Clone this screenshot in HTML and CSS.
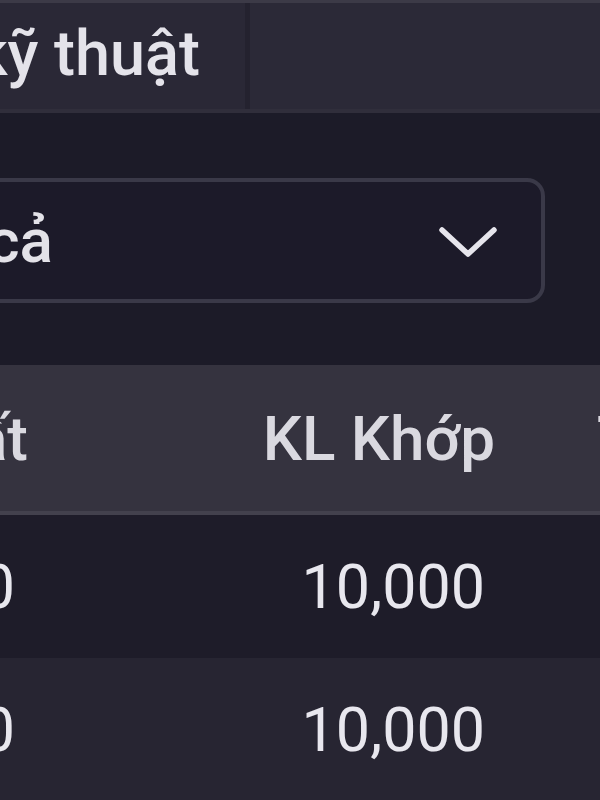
FILE: index.html
```html
<!DOCTYPE html>
<html lang="vi">
<head>
    <meta charset="UTF-8">
    <meta name="viewport" content="width=device-width, initial-scale=1.0">
    <title>Khớp lệnh</title>
    <link rel="stylesheet" href="styles.css">
</head>
<body>
    <div class="app">
        <div class="tabs">
            <div class="tab active">Phân tích kỹ thuật</div>
            <div class="tab"></div>
        </div>
        <div class="filter">
            <div class="select">
                <span>Tất cả</span>
                <svg class="chevron" viewBox="0 0 62 34" width="62" height="34">
                    <polyline points="5,5 31,29 57,5" fill="none" stroke="#e6e5ec" stroke-width="5.5" stroke-linecap="round" stroke-linejoin="round"/>
                </svg>
            </div>
        </div>
        <div class="trades">
            <div class="row head">
                <div class="cell c1">Giá thấp nhất</div>
                <div class="cell c2">KL Khớp</div>
                <div class="cell c3">Thời gian</div>
            </div>
            <div class="row">
                <div class="cell c1">25,500</div>
                <div class="cell c2">10,000</div>
                <div class="cell c3"></div>
            </div>
            <div class="row alt">
                <div class="cell c1">25,500</div>
                <div class="cell c2">10,000</div>
                <div class="cell c3"></div>
            </div>
        </div>
    </div>
</body>
</html>
```

FILE: styles.css
```css
body {
    margin: 0;
    background-color: #1c1b28;
    font-family: Roboto, "Noto Sans", sans-serif;
    overflow: hidden;
    width: 600px;
    height: 800px;
}
.app {
    width: 1200px;
    margin-left: -600px;
}
.tabs {
    display: flex;
    height: 106px;
    border-top: 3px solid #3c3a47;
    border-bottom: 4px solid #302e3b;
    background-color: #2b2937;
}
.tab {
    display: flex;
    align-items: center;
    justify-content: flex-end;
    font-size: 63px;
    font-weight: 500;
    color: #e4e3ea;
    white-space: nowrap;
}
.tab.active {
    width: 800px;
    padding-right: 45px;
    padding-bottom: 6px;
    background-color: #2a2836;
    border-right: 5px solid #24222f;
}
.filter {
    padding: 65px 55px 62px 440px;
}
.select {
    display: flex;
    align-items: center;
    justify-content: space-between;
    height: 117px;
    padding: 0 42px 0 40px;
    border: 4px solid #3a3948;
    border-radius: 18px;
    background-color: #1c1a29;
    font-size: 62px;
    font-weight: 500;
    color: #e3e2e8;
}
.chevron {
    display: block;
    margin-top: 2px;
}
.row {
    display: grid;
    grid-template-columns: 640px 515px 1fr;
    height: 143px;
    background-color: #1e1c29;
    color: #e8e7ee;
    font-size: 61px;
}
.row.head {
    height: 146px;
    background-color: #35333f;
    border-bottom: 4px solid #43414d;
    color: #dad9e0;
    font-size: 62px;
    font-weight: 500;
}
.row.alt {
    background-color: #272532;
}
.cell {
    display: flex;
    align-items: center;
    justify-content: flex-end;
    white-space: nowrap;
}
.c1 {
    padding-right: 25px;
}
.c2 {
    padding-right: 70px;
}
.head .c1 {
    padding-right: 12px;
}
.head .c2 {
    padding-right: 60px;
}
.c3 {
    justify-content: flex-start;
    padding-left: 42px;
}
```
